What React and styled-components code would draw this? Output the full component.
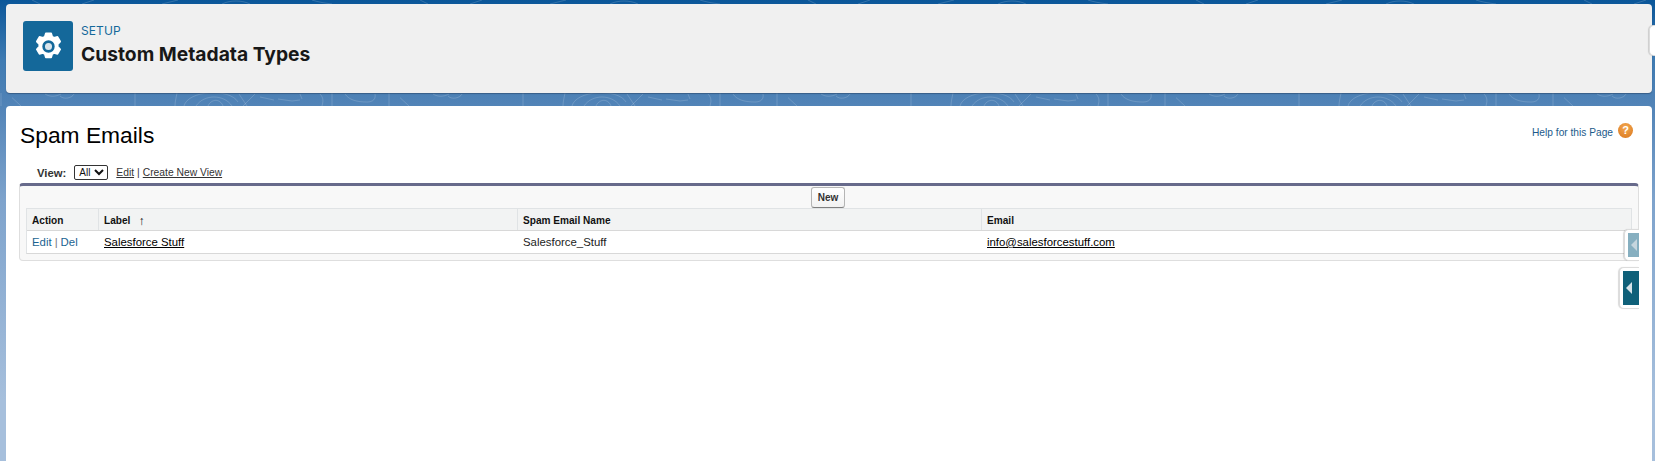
import React from 'react';
import styled, {createGlobalStyle} from 'styled-components';

const GlobalStyle = createGlobalStyle`
  html, body { margin: 0; padding: 0; background: #fff; }
  body { font-family: "Liberation Sans", Arial, sans-serif; overflow: hidden; }
`;

const Page = styled.div`
  position: relative;
  height: 461px;
  overflow: hidden;
  padding: 4px 3px 0 6px;
  box-sizing: border-box;
  display: flex;
  flex-direction: column;
  gap: 13px;
  background: linear-gradient(180deg, #0a5699 0px, #3f7bb2 60px, #4f82b6 100px, #7ea3cc 200px, #a6bfdc 400px);
`;

const Texture = styled.svg`
  position: absolute;
  left: 0;
  top: 0;
  width: 100%;
  height: 120px;
`;

const HeaderCard = styled.header`
  position: relative;
  height: 89px;
  flex: none;
  background: #f0f0f0;
  border-radius: 4px;
  box-shadow: 0 1px 1px rgba(30, 50, 80, .45);
  display: flex;
  align-items: flex-start;
  gap: 8px;
  padding: 17px 17px 0;
  box-sizing: border-box;
`;

const IconTile = styled.div`
  width: 50px;
  height: 50px;
  border-radius: 3px;
  background: #14689a;
  display: flex;
  align-items: center;
  justify-content: center;
`;

const Titles = styled.div`
  display: flex;
  flex-direction: column;
  margin-top: 2px;
  font-family: Inter, "Liberation Sans", sans-serif;
`;

const Eyebrow = styled.span`
  font-size: 12px;
  line-height: 15px;
  color: #14689a;
  letter-spacing: .1px;
`;

const PageType = styled.h1`
  margin: 3px 0 0;
  font-size: 19.25px;
  line-height: 26px;
  font-weight: 700;
  color: #181818;
`;

const ContentCard = styled.main`
  position: relative;
  flex: 1;
  background: #fff;
  border-radius: 4px 4px 0 0;
  padding: 12px 13px 0 13px;
`;

const TitleRow = styled.div`
  display: flex;
  justify-content: space-between;
  align-items: flex-start;
  height: 44px;
`;

const Title = styled.h2`
  margin: 3px 0 0 1px;
  font-size: 22.8px;
  line-height: 28px;
  font-weight: 400;
  color: #000;
`;

const Help = styled.a`
  display: flex;
  align-items: center;
  gap: 5px;
  margin: 8px 6px 0 0;
  font-size: 10.2px;
  color: #1c5a8a;
`;

const HelpDot = styled.span`
  width: 15px;
  height: 15px;
  border-radius: 50%;
  margin-top: -3px;
  background: radial-gradient(circle at 50% 30%, #f3a850, #d9761d);
  color: #fff;
  font-size: 11px;
  font-weight: 700;
  line-height: 15px;
  text-align: center;
`;

const ViewRow = styled.div`
  display: flex;
  align-items: center;
  height: 21px;
  padding-left: 18px;
  font-size: 10.3px;
  color: #333;
`;

const ViewLabel = styled.b`
  font-size: 11.3px;
  margin-right: 8px;
`;

const ViewSelect = styled.select`
  width: 34px;
  height: 15px;
  margin: 0 8px 0 0;
  padding: 0;
  font-family: inherit;
  font-size: 10px;
  border: 1px solid #333;
  border-radius: 2px;
  background: #fff;
  color: #111;
`;

const ViewLink = styled.a`
  color: #333;
  text-decoration: underline;
`;

const Sep = styled.span`
  margin: 0 3px;
`;

const ListBlock = styled.section`
  border: 1px solid #dedede;
  border-top: 3px solid #676a8b;
  border-radius: 4px;
  background: #f8f8f8;
  height: 78px;
  padding: 0 6px;
  box-sizing: border-box;
`;

const ButtonRow = styled.div`
  display: flex;
  justify-content: center;
  height: 22px;
  padding: 1px 2px 0 0;
  box-sizing: border-box;
`;

const NewButton = styled.button`
  width: 34px;
  height: 21px;
  padding: 0;
  border: 1px solid #b5b5b5;
  border-bottom-color: #7f7f7f;
  border-radius: 3px;
  background: linear-gradient(#fff, #f2f2f2);
  font-family: inherit;
  font-size: 10px;
  font-weight: 700;
  color: #333;
`;

const Table = styled.div`
  border: 1px solid #e0e3e5;
  border-bottom-color: #d8d8d8;
  background: #fff;
`;

const Row = styled.div`
  display: grid;
  grid-template-columns: 71px 419px 464px 1fr;
  height: ${props => props.$head ? '21px' : '22px'};
  align-items: center;
  background: ${props => props.$head ? '#f2f3f3' : '#fff'};
  border-bottom: ${props => props.$head ? '1px solid #d8d8d8' : 'none'};
`;

const HeadCell = styled.div`
  height: 100%;
  box-sizing: border-box;
  display: flex;
  align-items: center;
  gap: 8px;
  padding: 2px 0 0 5px;
  font-size: 10.1px;
  font-weight: 700;
  color: #111;
  border-left: ${props => props.$first ? 'none' : '1px solid #e0e3e5'};
`;

const SortArrow = styled.span`
  font-size: 12px;
  font-weight: 400;
`;

const Cell = styled.div`
  padding-left: 5px;
  margin-left: ${props => props.$first ? '0' : '1px'};
  font-size: 11.4px;
  color: #222;
`;

const RowLink = styled.a`
  color: #000;
  text-decoration: underline;
`;

const ActionLink = styled.a`
  color: #1b6391;
`;

const ActionSep = styled.span`
  color: #777;
  margin: 0 3px;
`;

const SideTab = styled.div`
  position: absolute;
  right: ${props => props.$right}px;
  top: ${props => props.$top}px;
  width: ${props => props.$width}px;
  height: ${props => props.$height}px;
  box-sizing: border-box;
  padding: 3px 0 3px 3px;
  background: #fff;
  border: 1px solid #dcdcdc;
  border-right: none;
  border-radius: 5px 0 0 5px;
  box-shadow: -1px 0 1px rgba(0, 0, 0, .15);
`;

const SideTabFace = styled.div`
  height: 100%;
  display: flex;
  align-items: center;
  padding-left: 3px;
  background: ${props => props.$muted ? '#86afc0' : '#0f6079'};
`;

const SideArrow = styled.i`
  width: 0;
  height: 0;
  border-top: 6px solid transparent;
  border-bottom: 6px solid transparent;
  border-right: 6px solid ${props => props.$muted ? '#c6d6de' : '#d6e2e8'};
`;

const Gear = () => (
  <svg width="31" height="31" viewBox="0 0 28 28">
    <path
      fill="#fff"
      stroke="#fff"
      strokeWidth="1.6"
      strokeLinejoin="round"
      d="M11.6 2.2h4.8l.9 3 1.8 1 3-.8 2.4 4.1-2.2 2.3v2.4l2.2 2.3-2.4 4.1-3-.8-1.8 1-.9 3h-4.8l-.9-3-1.8-1-3 .8-2.4-4.1 2.2-2.3v-2.4L3.5 9.5l2.4-4.1 3 .8 1.8-1z"
    />
    <circle cx="14" cy="14" r="4.4" fill="#d8e4ec" stroke="#14689a" strokeWidth="2.4" />
  </svg>
);

const Contours = () => (
  <Texture viewBox="0 0 1655 120" fill="none">
    <defs>
      <pattern id="contour" x="12" y="0" width="388" height="120" patternUnits="userSpaceOnUse">
        <g stroke="#ffffff" strokeOpacity=".16" strokeWidth="1">
          <path d="M-5 93l14 13M33 94c5 3 10 3 16 0M48 96c4 4 12 2 14-2" />
          <path d="M123 93v13M165 93c-1 5-2 9-2 13" />
          <path d="M172 106c4-16 46-18 54-4M184 106c8-12 28-12 36 0M196 106c3-7 12-8 15 0" />
          <path d="M227 94l8 12M243 94l-12 12M248 97l14 3M266 99l14 2 8-1M288 94l2 5" />
          <path d="M308 94c4 4 3 8 2 12M320 93v13M333 94c4 6 12 8 22 8 6 0 9-3 8-8M377 93v13" />
          <path d="M393 94l9 12" />
          <path d="M20 0l8 4M70 4l12-4M150 4c8-2 12-3 16-4M210 4c8-4 20-4 28 0M300 0c6 2 12 3 20 4" />
        </g>
      </pattern>
    </defs>
    <rect width="1655" height="120" fill="url(#contour)" />
  </Texture>
);

export default () => {
  return (
    <Page>
      <GlobalStyle />
      <Contours />
      <HeaderCard>
        <IconTile><Gear /></IconTile>
        <Titles>
          <Eyebrow>SETUP</Eyebrow>
          <PageType>Custom Metadata Types</PageType>
        </Titles>
        <SideTab $right={-4} $top={21} $width={7} $height={31} />
      </HeaderCard>
      <ContentCard>
        <TitleRow>
          <Title>Spam Emails</Title>
          <Help>Help for this Page <HelpDot>?</HelpDot></Help>
        </TitleRow>
        <ViewRow>
          <ViewLabel>View:</ViewLabel>
          <ViewSelect defaultValue="All"><option>All</option></ViewSelect>
          <ViewLink>Edit</ViewLink>
          <Sep>|</Sep>
          <ViewLink>Create New View</ViewLink>
        </ViewRow>
        <ListBlock>
          <ButtonRow><NewButton>New</NewButton></ButtonRow>
          <Table>
            <Row $head>
              <HeadCell $first>Action</HeadCell>
              <HeadCell>Label <SortArrow>↑</SortArrow></HeadCell>
              <HeadCell>Spam Email Name</HeadCell>
              <HeadCell>Email</HeadCell>
            </Row>
            <Row>
              <Cell $first><ActionLink>Edit</ActionLink><ActionSep>|</ActionSep><ActionLink>Del</ActionLink></Cell>
              <Cell><RowLink>Salesforce Stuff</RowLink></Cell>
              <Cell>Salesforce_Stuff</Cell>
              <Cell><RowLink>info@salesforcestuff.com</RowLink></Cell>
            </Row>
          </Table>
        </ListBlock>
        <SideTab $right={13} $top={123} $width={15} $height={32}>
          <SideTabFace $muted><SideArrow $muted /></SideTabFace>
        </SideTab>
        <SideTab $right={13} $top={161} $width={20} $height={42}>
          <SideTabFace><SideArrow /></SideTabFace>
        </SideTab>
      </ContentCard>
    </Page>
  );
};
